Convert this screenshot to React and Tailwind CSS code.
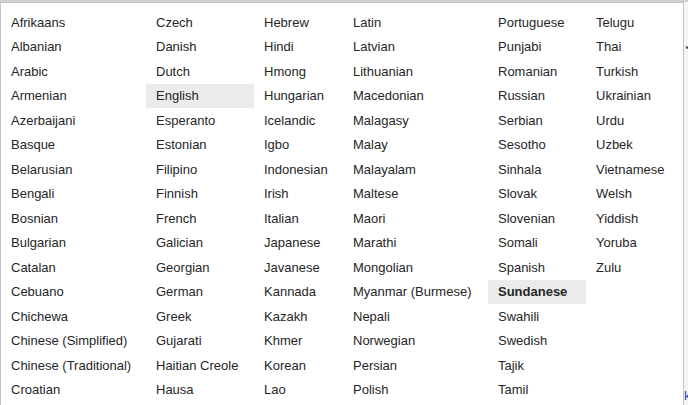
import React from "react";

const cols = [
  { w: "w-[145px]", items: ["Afrikaans","Albanian","Arabic","Armenian","Azerbaijani","Basque","Belarusian","Bengali","Bosnian","Bulgarian","Catalan","Cebuano","Chichewa","Chinese (Simplified)","Chinese (Traditional)","Croatian"] },
  { w: "w-[108px]", items: ["Czech","Danish","Dutch","English","Esperanto","Estonian","Filipino","Finnish","French","Galician","Georgian","German","Greek","Gujarati","Haitian Creole","Hausa"] },
  { w: "w-[89px]", items: ["Hebrew","Hindi","Hmong","Hungarian","Icelandic","Igbo","Indonesian","Irish","Italian","Japanese","Javanese","Kannada","Kazakh","Khmer","Korean","Lao"] },
  { w: "w-[145px]", items: ["Latin","Latvian","Lithuanian","Macedonian","Malagasy","Malay","Malayalam","Maltese","Maori","Marathi","Mongolian","Myanmar (Burmese)","Nepali","Norwegian","Persian","Polish"] },
  { w: "w-[98px]", items: ["Portuguese","Punjabi","Romanian","Russian","Serbian","Sesotho","Sinhala","Slovak","Slovenian","Somali","Spanish","Sundanese","Swahili","Swedish","Tajik","Tamil"] },
  { w: "w-[97px]", items: ["Telugu","Thai","Turkish","Ukrainian","Urdu","Uzbek","Vietnamese","Welsh","Yiddish","Yoruba","Zulu"] },
];

export default function App() {
  return (
    <div className="relative w-[688px] h-[405px] overflow-hidden bg-[#f4f4f4]" style={{ fontFamily: '"Liberation Sans", Arial, sans-serif' }}>
      <div className="h-[2px] bg-[#d0d0d0]" />
      <div className="w-[684px] h-[403px] bg-white border-l border-r border-t border-[#c4c4c4] flex pt-[7px]">
        {cols.map((c, ci) => (
          <div key={ci} className={`${c.w} flex flex-col shrink-0`}>
            {c.items.map((t) => {
              const selected = t === "English";
              const bold = t === "Sundanese";
              return (
                <div
                  key={t}
                  className={`h-[24.53px] flex items-center pl-[10px] text-[13px] whitespace-nowrap text-[#262626] ${selected || bold ? "bg-[#ebebeb]" : ""} ${bold ? "font-bold" : ""}`}
                >
                  {t}
                </div>
              );
            })}
          </div>
        ))}
      </div>
      <div className="absolute left-[684px] top-[40px] text-[12px] leading-none text-[#333]">✓</div>
      <div className="absolute left-[684px] top-[389px] text-[13px] leading-none text-[#1a4fc4]">k</div>
    </div>
  );
}
